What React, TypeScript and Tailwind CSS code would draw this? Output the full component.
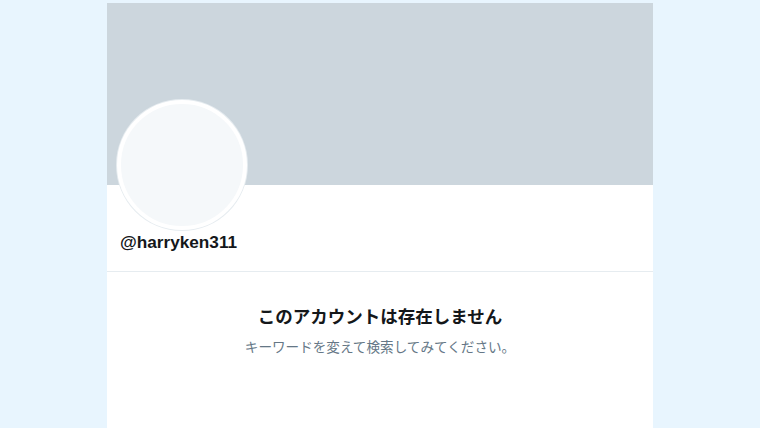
export default function App() {
    return (
        <div className="h-[428px] w-full bg-[#e8f5fe] flex justify-center pt-[3px] overflow-hidden"
             style={{fontFamily: '"Liberation Sans", "Noto Sans CJK JP", sans-serif'}}>
            <div className="w-[546px] bg-white flex flex-col">
                <div className="h-[182px] bg-[#ccd6dd] shrink-0"></div>
                <div className="px-[10px] h-[87px] border-b border-[#e6ecf0] shrink-0">
                    <div className="-mt-[85px] w-[130px] h-[130px] rounded-full bg-[#f5f8fa] border-[4px] border-white shadow-[0_0_0_1px_#e6ecf0]"></div>
                    <div className="pl-[3px] mt-[2px] h-[22px] flex items-center text-[17.2px] font-bold text-[#14171a]">@harryken311</div>
                </div>
                <div className="flex flex-col items-center pt-[34px]">
                    <h2 className="text-[17.5px] leading-[22px] font-bold text-[#14171a]">このアカウントは存在しません</h2>
                    <p className="mt-[11px] text-[13.6px] leading-[18px] text-[#657786]">キーワードを変えて検索してみてください。</p>
                </div>
            </div>
        </div>
    );
}
